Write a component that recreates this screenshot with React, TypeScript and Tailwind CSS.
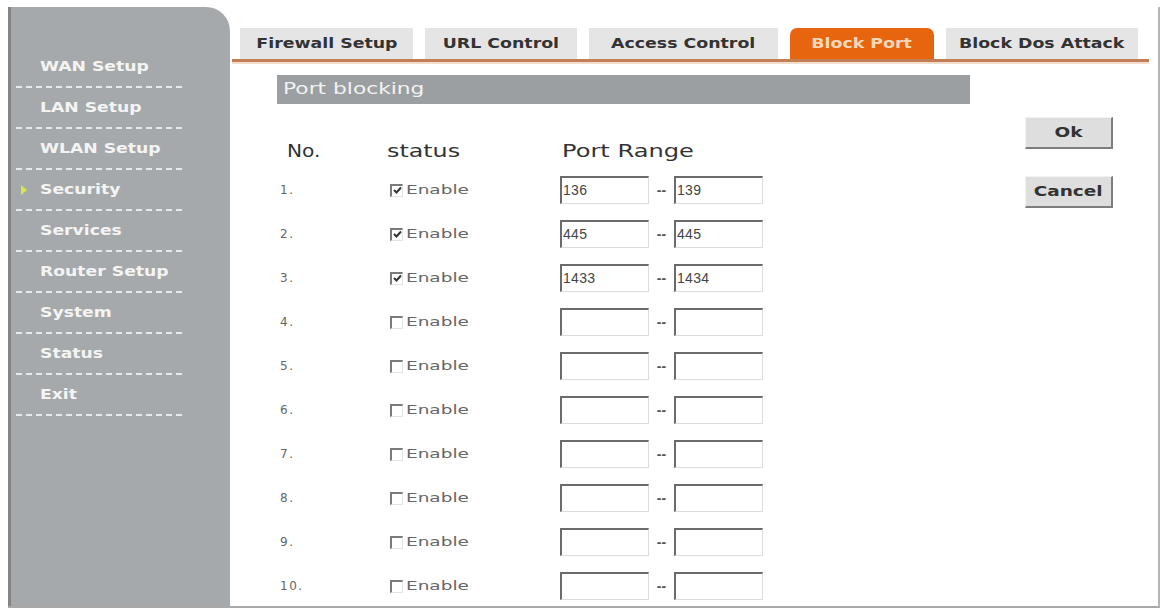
import React from "react";

const menu = [
  "WAN Setup",
  "LAN Setup",
  "WLAN Setup",
  "Security",
  "Services",
  "Router Setup",
  "System",
  "Status",
  "Exit",
];

const tabs = [
  { label: "Firewall Setup", w: "w-[173px]" },
  { label: "URL Control", w: "w-[152px]" },
  { label: "Access Control", w: "w-[189px]" },
  { label: "Block Port", w: "w-[144px]", active: true },
  { label: "Block Dos Attack", w: "w-[192px]" },
];

const rows: { on: boolean; from: string; to: string }[] = [
  { on: true, from: "136", to: "139" },
  { on: true, from: "445", to: "445" },
  { on: true, from: "1433", to: "1434" },
  { on: false, from: "", to: "" },
  { on: false, from: "", to: "" },
  { on: false, from: "", to: "" },
  { on: false, from: "", to: "" },
  { on: false, from: "", to: "" },
  { on: false, from: "", to: "" },
  { on: false, from: "", to: "" },
];

function Check({ on }: { on: boolean }) {
  return (
    <span className="flex h-[13px] w-[13px] shrink-0 items-center justify-center border-l-2 border-t-2 border-b border-r border-l-[#7a7a7a] border-t-[#7a7a7a] border-b-[#e4e4e4] border-r-[#e4e4e4] bg-white">
      {on && (
        <svg width="9" height="9" viewBox="0 0 9 9">
          <path d="M1 4 L3.5 6.5 L8 1.5" stroke="#333" strokeWidth="2" fill="none" />
        </svg>
      )}
    </span>
  );
}

function Field({ value }: { value: string }) {
  return (
    <div className="flex h-[28px] w-[89px] items-center border-l-2 border-t-2 border-b border-r border-l-[#6b6b6b] border-t-[#6b6b6b] border-b-[#dcdcdc] border-r-[#dcdcdc] bg-white pl-[1px] text-[14px] tracking-[0.3px] text-[#444] [font-family:'Liberation_Sans',Arial,sans-serif]">
      {value}
    </div>
  );
}

function Btn({ label }: { label: string }) {
  return (
    <button className="flex h-[32px] w-[88px] items-center justify-center border-l border-t border-b-2 border-r-2 border-l-[#f2f2f2] border-t-[#f2f2f2] border-b-[#7d7d7d] border-r-[#7d7d7d] bg-[#dedede] text-[14px] font-bold text-[#333] [font-family:'DejaVu_Sans',Verdana,sans-serif]">
      <span className="inline-block scale-x-[1.32]">{label}</span>
    </button>
  );
}

export default function App() {
  return (
    <div className="h-[612px] w-[1165px] overflow-hidden bg-white pl-[8px] pt-[7px]">
      <div className="flex h-[601px] w-[1152px] overflow-hidden border-b-2 border-r-2 border-b-[#a9a9a9] border-r-[#b5b5b5]">
        {/* side menu */}
        <aside className="flex h-full w-[222px] shrink-0 flex-col rounded-tr-[24px] border-l-[3px] border-l-[#858585] bg-[#a6a9ab] pt-[40px] [font-family:'DejaVu_Sans',Verdana,sans-serif]">
          {menu.map((m) => (
            <div
              key={m}
              className="relative ml-[5px] flex h-[41px] w-[166px] items-center border-b-2 border-dashed border-b-[#e6e8ea] pl-[24px] text-[14px] font-bold text-[#f4f4f4]"
            >
              {m === "Security" && (
                <span className="absolute left-[5px] top-[15px] h-0 w-0 border-y-[5px] border-l-[6px] border-y-transparent border-l-[#d7e84a]" />
              )}
              <span className="inline-block origin-left scale-x-[1.23] whitespace-nowrap">{m}</span>
            </div>
          ))}
        </aside>

        {/* main panel */}
        <main className="flex-1 pt-[21px]">
          <nav className="ml-[2px] mr-[9px]">
            <div className="flex gap-[12px] pl-[8px]">
              {tabs.map((t) => (
                <div
                  key={t.label}
                  className={`flex h-[31px] items-center justify-center text-[14px] font-bold [font-family:'DejaVu_Sans',Verdana,sans-serif] ${t.w} ${
                    t.active
                      ? "rounded-t-[7px] bg-[#e8650f] text-[#f7d8b8]"
                      : "bg-[#e5e5e5] text-[#333]"
                  }`}
                >
                  <span className="inline-block scale-x-[1.24] whitespace-nowrap">{t.label}</span>
                </div>
              ))}
            </div>
            <div className="h-[3px] bg-[#c27f57]" />
            <div className="h-[2px] bg-[#f4ddcc]" />
          </nav>

          <div className="flex">
            <section className="ml-[47px] w-[693px]">
              <div className="mt-[11px] flex h-[29px] items-center bg-[#9c9fa1] pl-[6px] text-[15px] text-[#f2f2f2] [font-family:'DejaVu_Sans',Verdana,sans-serif]">
                <span className="inline-block origin-left scale-x-[1.45]">Port blocking</span>
              </div>

              <div className="mt-[28px] flex h-[36px] items-center text-[18px] text-[#333] [font-family:'DejaVu_Sans',Verdana,sans-serif]">
                <span className="ml-[10px] w-[100px]">
                  <span className="inline-block origin-left scale-x-[1.12]">No.</span>
                </span>
                <span className="w-[175px]">
                  <span className="inline-block origin-left scale-x-[1.32]">status</span>
                </span>
                <span>
                  <span className="inline-block origin-left scale-x-[1.34]">Port Range</span>
                </span>
              </div>

              {rows.map((r, i) => (
                <div key={i} className="flex h-[44px] items-center">
                  <span className="ml-[3px] w-[110px] text-[12px] tracking-[1.5px] text-[#666] [font-family:'DejaVu_Sans',Verdana,sans-serif]">
                    {i + 1}.
                  </span>
                  <span className="flex w-[170px] items-center gap-[3px] text-[13px] text-[#666] [font-family:'DejaVu_Sans',Tahoma,sans-serif]">
                    <Check on={r.on} />
                    <span className="inline-block origin-left scale-x-[1.42]">Enable</span>
                  </span>
                  <Field value={r.from} />
                  <span className="w-[25px] text-center text-[14px] font-bold text-[#555] [font-family:'Liberation_Sans',Arial,sans-serif]">
                    --
                  </span>
                  <Field value={r.to} />
                </div>
              ))}
            </section>

            <div className="ml-[55px] mt-[53px] flex flex-col gap-[27px]">
              <Btn label="Ok" />
              <Btn label="Cancel" />
            </div>
          </div>
        </main>
      </div>
    </div>
  );
}
